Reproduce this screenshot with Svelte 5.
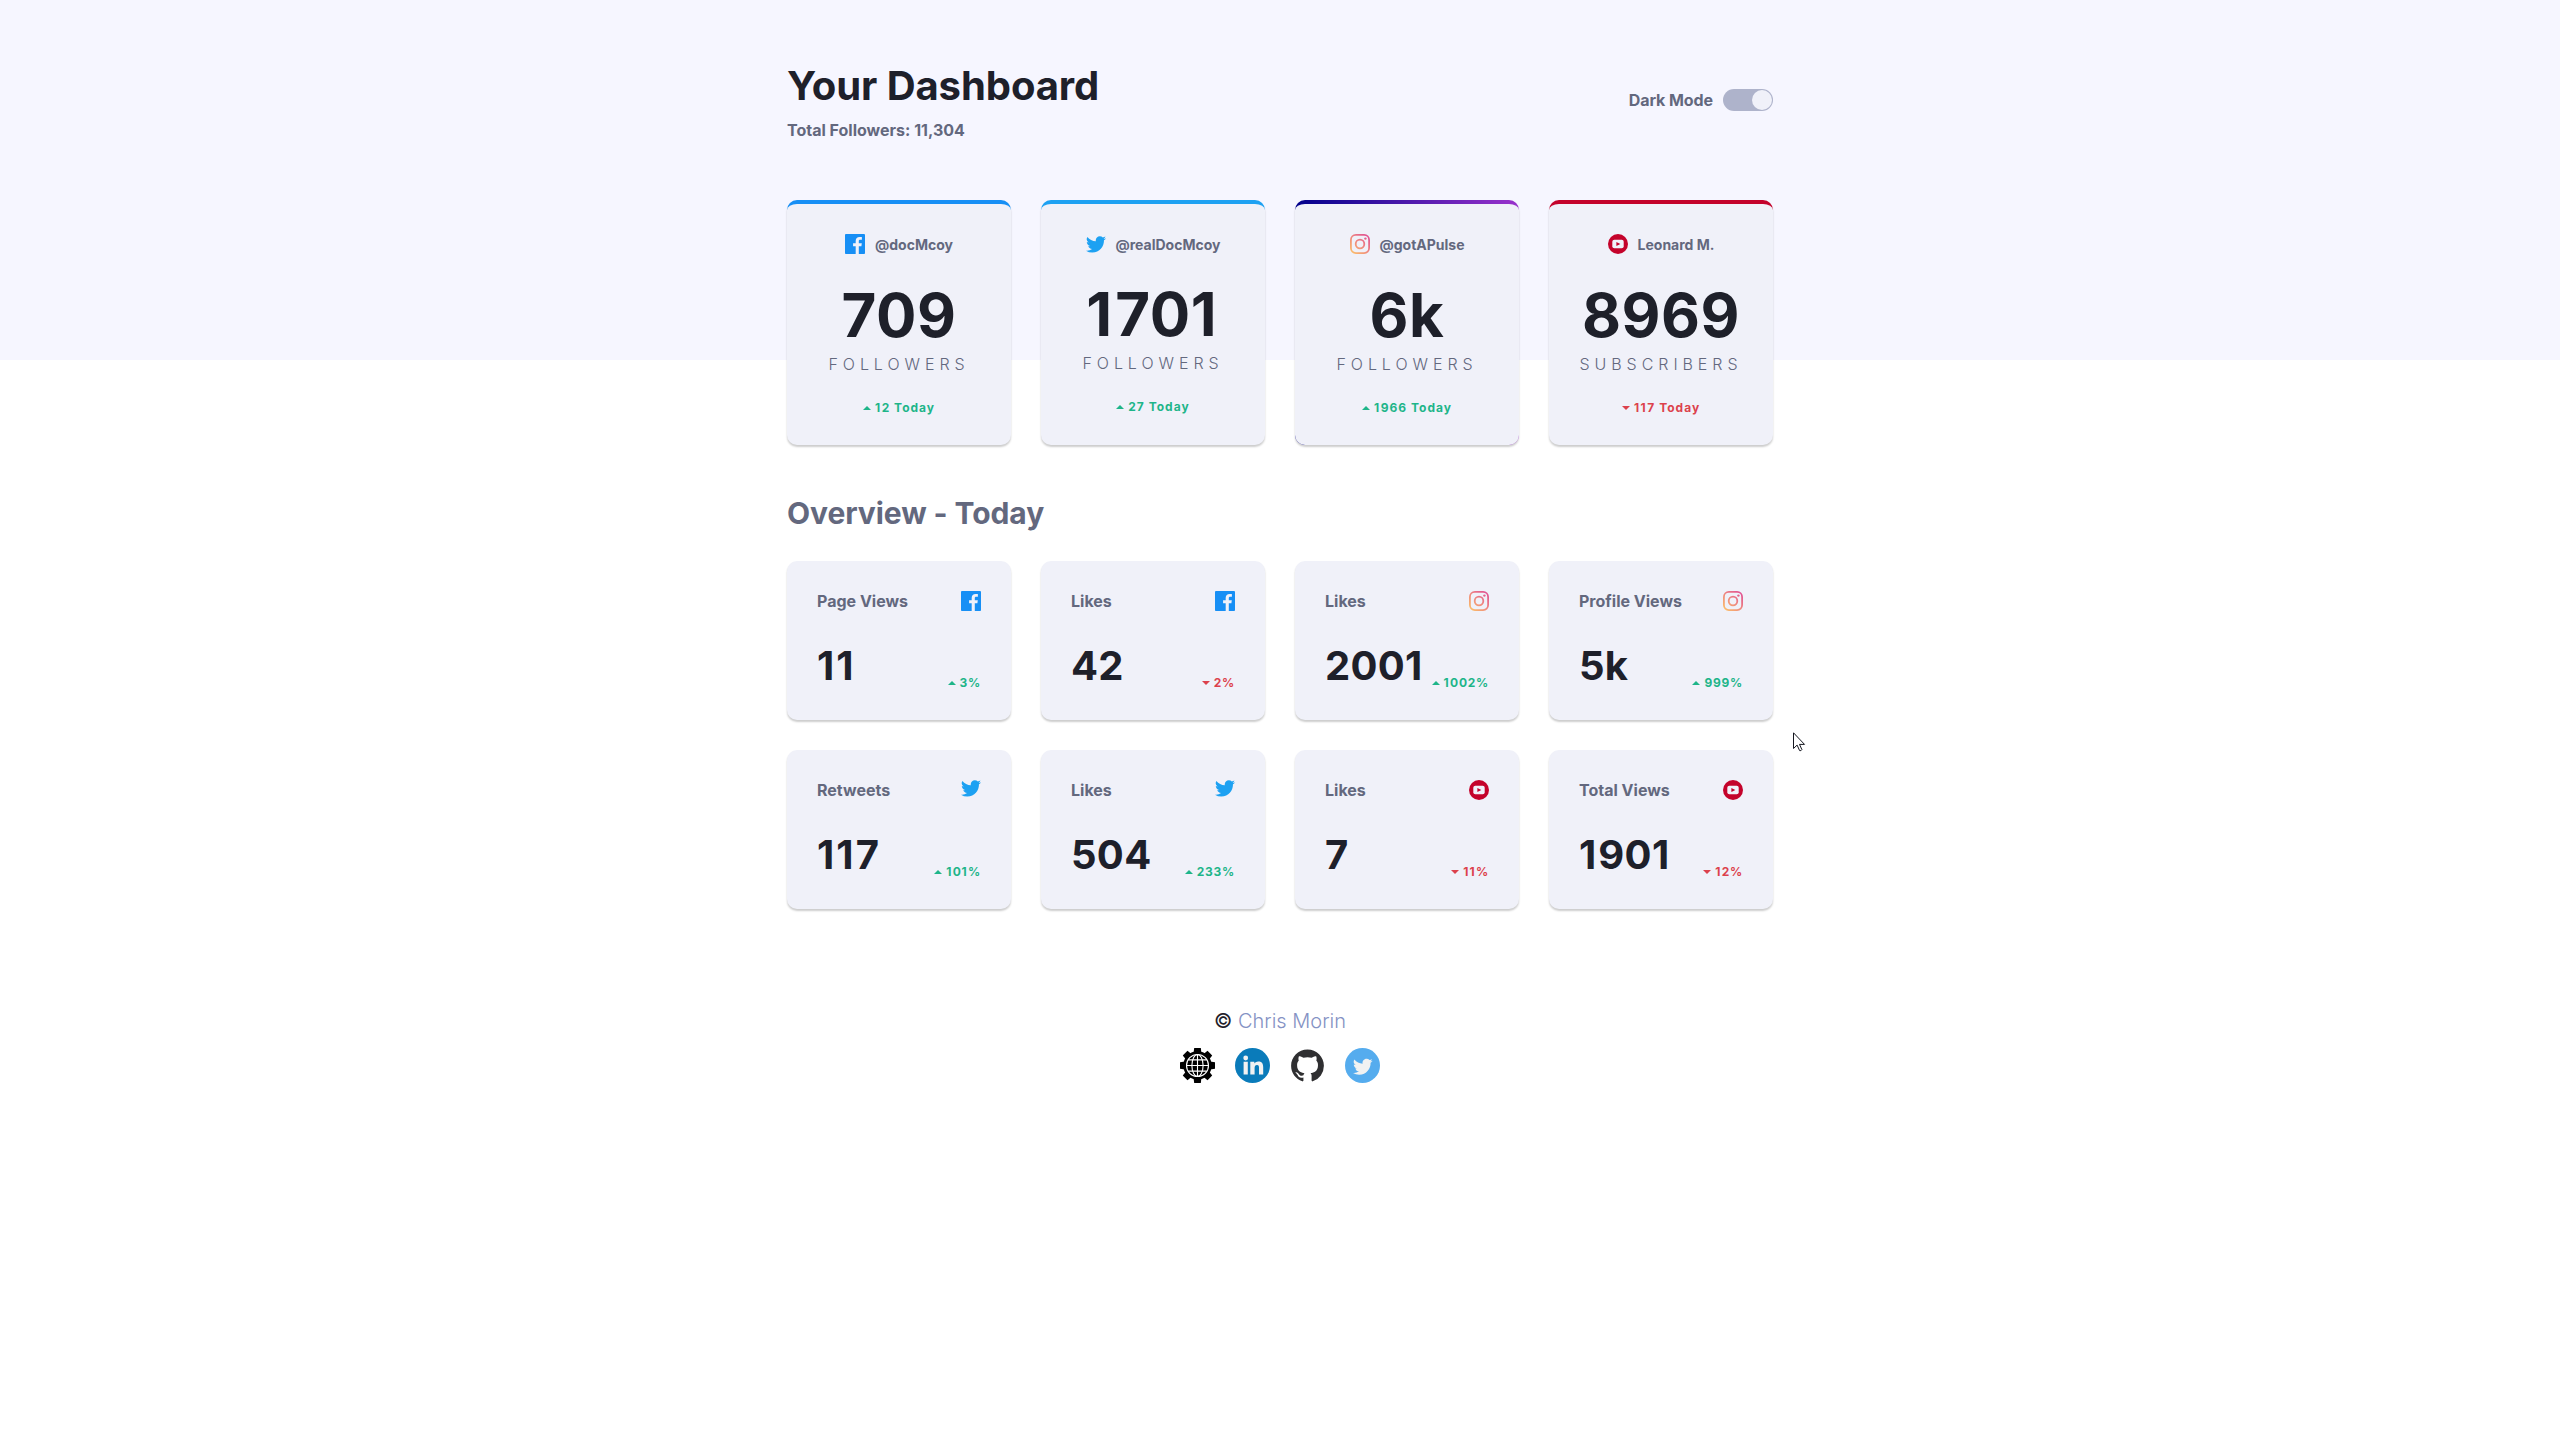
<script>
  const accounts = [
    { icon: 'facebook', name: '@docMcoy', count: '709', unit: 'Followers', up: true, delta: '12' },
    { icon: 'twitter', name: '@realDocMcoy', count: '1701', unit: 'Followers', up: true, delta: '27' },
    { icon: 'instagram', name: '@gotAPulse', count: '6k', unit: 'Followers', up: true, delta: '1966' },
    { icon: 'youtube', name: 'Leonard M.', count: '8969', unit: 'Subscribers', up: false, delta: '117' },
  ];
  const stats = [
    { label: 'Page Views', icon: 'facebook', value: '11', up: true, pct: '3%' },
    { label: 'Likes', icon: 'facebook', value: '42', up: false, pct: '2%' },
    { label: 'Likes', icon: 'instagram', value: '2001', up: true, pct: '1002%' },
    { label: 'Profile Views', icon: 'instagram', value: '5k', up: true, pct: '999%' },
    { label: 'Retweets', icon: 'twitter', value: '117', up: true, pct: '101%' },
    { label: 'Likes', icon: 'twitter', value: '504', up: true, pct: '233%' },
    { label: 'Likes', icon: 'youtube', value: '7', up: false, pct: '11%' },
    { label: 'Total Views', icon: 'youtube', value: '1901', up: false, pct: '12%' },
  ];
  const teeth = [0, 45, 90, 135, 180, 225, 270, 315];
</script>

<!-- Gives the narrow "1" a little more room inside a number. -->
{#snippet figures(text)}{#each text.split(/(1)/) as part}{#if part === '1'}<span class="one">1</span>{:else}{part}{/if}{/each}{/snippet}

{#snippet brand(name)}
  {#if name === 'facebook'}
    <svg class="icon" width="20" height="20" viewBox="0 0 20 20"><path fill="#178FF5" d="M18.896 0H1.104C.494 0 0 .494 0 1.104v17.793C0 19.506.494 20 1.104 20h9.58v-7.745H8.076V9.237h2.606V7.01c0-2.583 1.578-3.99 3.883-3.99 1.104 0 2.052.082 2.329.119v2.7h-1.598c-1.254 0-1.496.597-1.496 1.47v1.928h2.989l-.39 3.018h-2.6V20h5.098c.608 0 1.102-.494 1.102-1.104V1.104C20 .494 19.506 0 18.896 0z" /></svg>
  {:else if name === 'twitter'}
    <svg class="icon" width="20" height="17" viewBox="0 0 20 17"><path fill="#1DA1F2" d="M20 2.172a8.192 8.192 0 01-2.357.646 4.11 4.11 0 001.805-2.27 8.22 8.22 0 01-2.606.996A4.096 4.096 0 0013.847.248c-2.65 0-4.596 2.472-3.998 5.037A11.648 11.648 0 011.392 1 4.109 4.109 0 002.662 6.478 4.086 4.086 0 01.8 5.965c-.045 1.9 1.318 3.679 3.291 4.075a4.113 4.113 0 01-1.853.07 4.106 4.106 0 003.833 2.849A8.25 8.25 0 010 14.658a11.616 11.616 0 006.29 1.843c7.618 0 11.922-6.434 11.662-12.205A8.354 8.354 0 0020 2.172z" /></svg>
  {:else if name === 'instagram'}
    <svg class="icon" width="20" height="20" viewBox="0 0 20 20">
      <defs><linearGradient id="insta" gradientUnits="userSpaceOnUse" x1="1" y1="20" x2="19" y2="0"><stop offset="0" stop-color="#FDC468" /><stop offset="1" stop-color="#DF4996" /></linearGradient></defs>
      <rect x=".9" y=".9" width="18.2" height="18.2" rx="5" fill="none" stroke="url(#insta)" stroke-width="1.8" />
      <circle cx="10" cy="10" r="4.3" fill="none" stroke="url(#insta)" stroke-width="1.8" />
      <circle cx="15.4" cy="4.6" r="1.2" fill="url(#insta)" />
    </svg>
  {:else}
    <svg class="icon" width="20" height="20" viewBox="0 0 20 20">
      <circle cx="10" cy="10" r="10" fill="#C4032B" />
      <rect x="4.3" y="5.7" width="11.4" height="8.6" rx="2" fill="#F0F1F9" />
      <path d="M8.4 7.9v4.2l3.9-2.1z" fill="#C4032B" />
    </svg>
  {/if}
{/snippet}

{#snippet change(up, text)}
  <div class="change" class:down={!up}>
    <svg width="8" height="4" viewBox="0 0 8 4"><path d={up ? 'M0 4l4-4 4 4z' : 'M0 0l4 4 4-4z'} fill="currentColor" /></svg>
    <span>{@render figures(text)}</span>
  </div>
{/snippet}

<div class="page">
  <div class="container">
    <header>
      <div>
        <h1>Your Dashboard</h1>
        <p class="total">Total Followers: 11,304</p>
      </div>
      <div class="mode">
        <span>Dark Mode</span>
        <div class="toggle"><div class="knob"></div></div>
      </div>
    </header>

    <main>
      <section class="grid">
        {#each accounts as a}
          <article class="account {a.icon}">
            <div class="handle">{@render brand(a.icon)}<span>{a.name}</span></div>
            <div class="count">{@render figures(a.count)}</div>
            <div class="unit">{a.unit}</div>
            {@render change(a.up, a.delta + ' Today')}
          </article>
        {/each}
      </section>

      <h2>Overview - Today</h2>

      <section class="grid">
        {#each stats as s}
          <article class="stat">
            <div class="row"><span class="label">{s.label}</span>{@render brand(s.icon)}</div>
            <div class="row bottom"><span class="value">{@render figures(s.value)}</span>{@render change(s.up, s.pct)}</div>
          </article>
        {/each}
      </section>
    </main>

    <footer>
      <p>© <span class="author">Chris Morin</span></p>
      <div class="links">
        <svg width="35" height="35" viewBox="0 0 35 35">
          <circle cx="17.5" cy="17.5" r="14.2" />
          {#each teeth as t}
            <path d="M13.6 5 14.2 0h6.600l.6 5z" transform="rotate({t} 17.5 17.5)" />
          {/each}
          <g fill="none" stroke="#fff" stroke-width="1.1">
            <circle cx="17.5" cy="17.5" r="11" />
            <ellipse cx="17.5" cy="17.5" rx="5.6" ry="11" />
            <path d="M17.5 6.5v22M6.5 17.5h22M8.2 11.9h18.6M8.2 23.1h18.6" />
          </g>
        </svg>
        <svg width="35" height="35" viewBox="0 0 35 35">
          <circle cx="17.5" cy="17.5" r="17.5" fill="#0A7BBA" />
          <g fill="#F1F2F2">
            <circle cx="10.7" cy="10" r="2.4" />
            <path d="M8.6 13.8h4.2v12.6H8.6zM15.3 13.8h4v1.8c.6-1.1 2-2.1 4-2.1 4.200 0 4.900 2.700 4.900 6.100v6.800H24v-6.100c0-1.400 0-3.300-2-3.300s-2.400 1.600-2.400 3.200v6.200h-4.300z" />
          </g>
        </svg>
        <svg width="35" height="35" viewBox="0 0 35 35">
          <path transform="translate(1.1 1.4) scale(2.050)" fill="#2F2F31" d="M8 0C3.580 0 0 3.580 0 8c0 3.540 2.290 6.530 5.470 7.590.4.070.55-.17.55-.38 0-.19-.01-.82-.01-1.490-2.010.37-2.530-.49-2.690-.94-.09-.23-.48-.94-.82-1.130-.28-.15-.68-.52-.01-.53.63-.01 1.080.58 1.230.82.72 1.210 1.870.87 2.330.66.07-.52.28-.87.51-1.070-1.780-.2-3.640-.89-3.640-3.950 0-.87.31-1.590.82-2.150-.08-.2-.36-1.020.08-2.120 0 0 .67-.21 2.200.82.64-.18 1.320-.27 2-.27s1.360.09 2 .27c1.530-1.040 2.200-.82 2.200-.82.44 1.100.16 1.920.08 2.120.51.56.82 1.270.82 2.150 0 3.070-1.870 3.750-3.650 3.950.29.25.54.73.54 1.480 0 1.070-.01 1.930-.01 2.200 0 .21.15.46.55.38A8.010 8.010 0 0016 8c0-4.420-3.580-8-8-8z" />
        </svg>
        <svg width="35" height="35" viewBox="0 0 35 35">
          <circle cx="17.5" cy="17.5" r="17.5" fill="#55ACEE" />
          <path transform="translate(8 10.600) scale(.98)" fill="#F1F2F2" d="M20 2.172a8.192 8.192 0 01-2.357.646 4.11 4.11 0 001.805-2.27 8.22 8.22 0 01-2.606.996A4.096 4.096 0 0013.847.248c-2.65 0-4.596 2.472-3.998 5.037A11.648 11.648 0 011.392 1 4.109 4.109 0 002.662 6.478 4.086 4.086 0 01.8 5.965c-.045 1.9 1.318 3.679 3.291 4.075a4.113 4.113 0 01-1.853.07 4.106 4.106 0 003.833 2.849A8.25 8.25 0 010 14.658a11.616 11.616 0 006.29 1.843c7.618 0 11.922-6.434 11.662-12.205A8.354 8.354 0 0020 2.172z" />
        </svg>
      </div>
    </footer>
  </div>
  <svg class="cursor" width="13" height="20" viewBox="0 0 13 20"><path d="M.5.8v15.700l3.600-3.400 2.500 5.500q1.500.6 2.300-1l-2.400-5.200h5z" fill="#fff" stroke="#14161f" stroke-width="1" /></svg>
</div>

<style>
  :global(body) { margin: 0; background: #fff; }
  .page {
    position: relative;
    min-height: 1440px;
    background: linear-gradient(#f6f6ff, #f6f6ff) 0 0 / 100% 360px no-repeat #fff;
    font-family: Inter, sans-serif;
    color: #63687e;
  }
  .container { width: 986px; margin: 0 auto; padding-top: 62px; }
  h1, h2, p { margin: 0; }
  svg { display: block; flex: none; }
  header { display: flex; justify-content: space-between; height: 138px; font-weight: 700; }
  h1 { font-size: 40px; line-height: 48px; font-weight: 700; letter-spacing: -.08px; color: #1e202a; }
  .total { margin-top: 10px; font-size: 16px; line-height: 20px; font-weight: 700; }
  .mode { display: flex; align-items: center; gap: 10px; height: 22px; margin-top: 27px; font-size: 16px; letter-spacing: -.08px; }
  .toggle { box-sizing: border-box; width: 50px; height: 22px; padding: 1px; border-radius: 11px; background: #aeb3cb; display: flex; justify-content: flex-end; }
  .knob { width: 20px; height: 20px; border-radius: 50%; background: #f0f1f9; }
  .grid { display: grid; grid-template-columns: repeat(4, 224px); gap: 30px; }
  article { box-sizing: border-box; border-radius: 10px; background: #f0f1f9; box-shadow: 0 2px 2px rgba(0, 0, 0, .2); }
  .account { height: 245px; border-top: 4px solid #178ff5; padding-top: 30px; display: flex; flex-direction: column; align-items: center; }
  .account.twitter { border-top-color: #1da1f2; }
  .account.youtube { border-top-color: #c4032b; }
  .account.instagram {
    border-top-color: transparent;
    background: linear-gradient(#f0f1f9, #f0f1f9) padding-box, linear-gradient(to right, #00008b, #9932cc) border-box;
  }
  .handle { display: flex; align-items: center; gap: 10px; font-size: 14px; line-height: 19px; font-weight: 700; }
  .twitter .handle span, .twitter .handle :global(.icon) { position: relative; top: 1px; }
  .one { margin-right: .045em; }
  .count { margin-top: 25px; font-size: 60px; line-height: 72px; font-weight: 700; letter-spacing: .5px; color: #1e202a; }
  .unit { margin-top: 3px; font-size: 16px; line-height: 20px; letter-spacing: 4.95px; font-weight: 340; text-transform: uppercase; }
  .change { display: flex; align-items: center; gap: 4px; font-size: 12px; line-height: 16px; font-weight: 700; letter-spacing: 1px; color: #1eb589; }
  .change.down { color: #dc414c; }
  .account .change { margin-top: 26px; }
  h2 { margin-top: 50px; font-size: 30px; line-height: 36px; font-weight: 700; letter-spacing: -.08px; }
  h2 + .grid { margin-top: 30px; }
  .stat { height: 159px; padding: 30px 30px 29px; display: flex; flex-direction: column; justify-content: space-between; }
  .row { display: flex; justify-content: space-between; align-items: flex-start; }
  .bottom { align-items: flex-end; }
  .bottom .change { letter-spacing: .75px; }
  .label { font-size: 16px; line-height: 20px; font-weight: 700; }
  .value { margin-bottom: 1px; font-size: 40px; line-height: 48px; font-weight: 700; letter-spacing: .3px; color: #1e202a; }
  footer { margin-top: 99px; display: flex; flex-direction: column; align-items: center; }
  footer p { font-size: 20px; line-height: 26px; color: #1e202a; }
  .author { color: #8592c4; font-weight: 320; }
  .links { display: flex; gap: 20px; margin-top: 14px; }
  .cursor { position: absolute; left: 1793px; top: 732px; }
</style>
